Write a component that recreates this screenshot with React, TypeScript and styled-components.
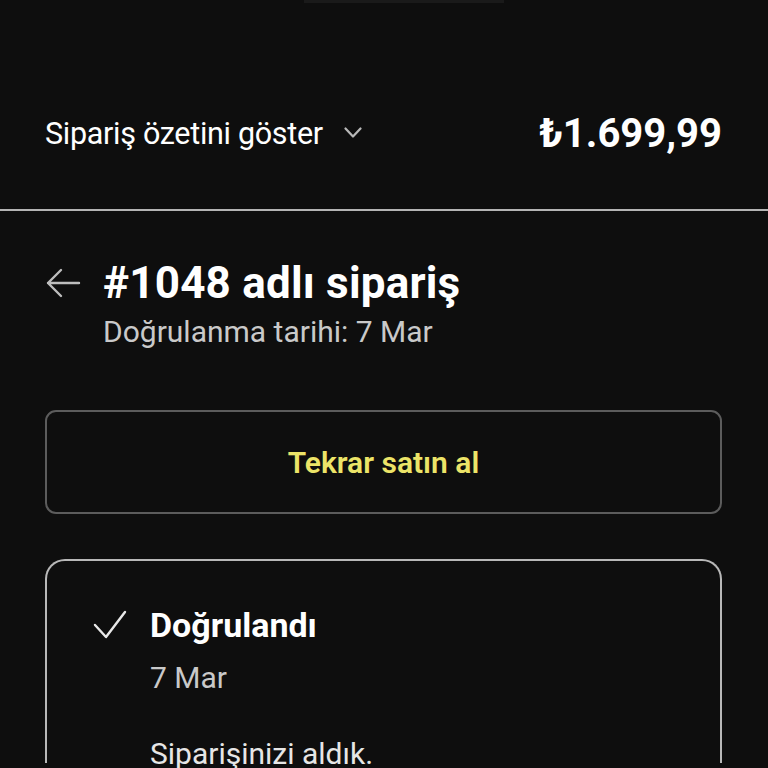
import styled, { createGlobalStyle } from 'styled-components'

const GlobalStyle = createGlobalStyle`
  html, body {
    margin: 0;
    padding: 0;
    background: #0e0e0e;
  }
  body {
    font-family: Roboto, "Liberation Sans", sans-serif;
    color: #fff;
    height: 768px;
    overflow: hidden;
  }
`

const Page = styled.div`
  width: 768px;
  height: 768px;
  overflow: hidden;
  background: #0e0e0e;
  display: flex;
  flex-direction: column;
  & > * {
    flex-shrink: 0;
  }
`

const TopNotch = styled.div`
  align-self: center;
  width: 200px;
  height: 3px;
  margin-left: 39px;
  background: #1a1a1a;
`

const SummaryBar = styled.div`
  height: 208px;
  display: flex;
  align-items: center;
  justify-content: space-between;
  padding: 54px 46px 0 45px;
  box-sizing: border-box;
  border-bottom: 2px solid #b4b4b4;
`

const SummaryToggle = styled.button`
  display: flex;
  align-items: center;
  gap: 21px;
  background: none;
  border: none;
  padding: 0;
  color: #fff;
  font-family: inherit;
  font-size: 30.5px;
  letter-spacing: -0.3px;
  cursor: pointer;
`

const Price = styled.span`
  font-size: 40px;
  font-weight: 700;
`

const Content = styled.main`
  padding: 46px 46px 0 45px;
  display: flex;
  flex-direction: column;
`

const OrderHeader = styled.div`
  display: grid;
  grid-template-columns: 58px 1fr;
  align-items: center;
  row-gap: 5px;
`

const BackButton = styled.button`
  background: none;
  border: none;
  padding: 0;
  display: flex;
  cursor: pointer;
`

const Title = styled.h1`
  margin: 0;
  font-size: 44px;
  font-weight: 700;
  line-height: 52px;
  letter-spacing: 0.2px;
`

const Subtitle = styled.div`
  grid-column: 2;
  font-size: 30px;
  line-height: 36px;
  color: #c9c9c9;
`

const ReorderButton = styled.button`
  margin-top: 60px;
  height: 104px;
  border: 2px solid #5c5c5c;
  border-radius: 11px;
  background: transparent;
  color: #ece468;
  font-family: inherit;
  font-size: 30px;
  font-weight: 600;
  cursor: pointer;
`

const StatusCard = styled.section`
  margin-top: 45px;
  border: 2px solid #b8b8b8;
  border-bottom: none;
  border-radius: 20px 20px 0 0;
  padding: 42px 0 0 46px;
  height: 160px;
`

const StatusRow = styled.div`
  display: grid;
  grid-template-columns: 57px 1fr;
  align-items: center;
`

const StatusTitle = styled.div`
  font-size: 34px;
  font-weight: 700;
  line-height: 44px;
`

const StatusDate = styled.div`
  grid-column: 2;
  margin-top: 13px;
  font-size: 30px;
  line-height: 36px;
  color: #c9c9c9;
`

const StatusText = styled.div`
  grid-column: 2;
  margin-top: 40px;
  font-size: 30px;
  line-height: 36px;
  color: #e6e6e6;
`

export default function App() {
  return (
    <Page>
      <GlobalStyle />
      <TopNotch />
      <SummaryBar>
        <SummaryToggle>
          Sipariş özetini göster
          <svg width="18" height="12" viewBox="0 0 18 12" fill="none">
            <path d="M1.5 1.5l7.5 8 7.5-8" stroke="#b8b8b8" strokeWidth="2.2" strokeLinecap="round" strokeLinejoin="round" />
          </svg>
        </SummaryToggle>
        <Price>₺1.699,99</Price>
      </SummaryBar>
      <Content>
        <OrderHeader>
          <BackButton aria-label="Geri">
            <svg width="36" height="30" viewBox="0 0 36 30" fill="none">
              <path d="M34 15H3M16 2L3 15l13 13" stroke="#bdbdbd" strokeWidth="2.4" strokeLinecap="round" strokeLinejoin="round" />
            </svg>
          </BackButton>
          <Title>#1048 adlı sipariş</Title>
          <Subtitle>Doğrulanma tarihi: 7 Mar</Subtitle>
        </OrderHeader>
        <ReorderButton>Tekrar satın al</ReorderButton>
        <StatusCard>
          <StatusRow>
            <svg width="34" height="30" viewBox="0 0 34 30" fill="none">
              <path d="M2 15l11 12L32 2" stroke="#e8e8e8" strokeWidth="2.4" strokeLinecap="round" strokeLinejoin="round" />
            </svg>
            <StatusTitle>Doğrulandı</StatusTitle>
            <StatusDate>7 Mar</StatusDate>
            <StatusText>Siparişinizi aldık.</StatusText>
          </StatusRow>
        </StatusCard>
      </Content>
    </Page>
  )
}
